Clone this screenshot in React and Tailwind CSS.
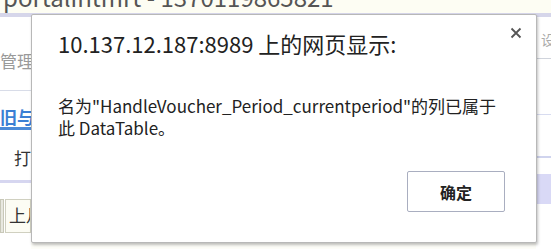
import React from "react";

export default function App() {
  const font = { fontFamily: '"Noto Sans CJK SC", "Microsoft YaHei", sans-serif' };
  return (
    <div
      className="relative w-[551px] h-[249px] overflow-hidden bg-[#fdfdf8]"
      style={font}
    >
      {/* background page */}
      <div className="flex flex-col w-full h-full">
        <div className="h-[13px] overflow-hidden bg-[#fdfdf3]">
          <div className="-mt-[16px] pl-[3px] text-[24px] leading-[26px] text-[#555] whitespace-nowrap">
            portalintmrt - 1370119865821
          </div>
        </div>
        <div className="h-[4px] bg-[#d6d6ea]" />
        <div className="flex flex-1">
          {/* left strip */}
          <div className="w-[31px] flex flex-col bg-white">
            <div className="h-[29px]" />
            <div className="h-[30px] text-[17px] leading-[30px] text-[#9a9a9a] whitespace-nowrap">管理</div>
            <div className="h-[14px]" />
            <div className="h-[1px] bg-[#d8dce8]" />
            <div className="h-[16px]" />
            <div className="h-[20px] text-[17px] leading-[20px] font-bold text-[#3b7fd4] whitespace-nowrap">旧与</div>
            <div className="h-[3px] bg-[#4b8ad8]" />
            <div className="h-[16px]" />
            <div className="h-[24px] pl-[14px] text-[17px] leading-[24px] text-[#333] whitespace-nowrap">打</div>
            <div className="h-[10px]" />
            <div className="h-[3px] bg-[#d6d6f0]" />
            <div className="h-[16px]" />
            <div className="flex h-[34px]">
              <div className="w-[4px] border border-[#c8c8b8] bg-[#e8e8e0]" />
              <div className="ml-[1px] flex-1 border border-[#d0d0c0] bg-[#fcfcf4] pl-[3px] text-[17px] leading-[30px] text-[#333] whitespace-nowrap overflow-hidden">
                上月
              </div>
            </div>
          </div>
          <div className="flex-1" />
          {/* right strip */}
          <div className="w-[15px] flex flex-col bg-white">
            <div className="h-[2px]" />
            <div className="h-[40px] border-b border-[#d0d4dc] pl-[5px] text-[14px] leading-[40px] text-[#aaa] overflow-hidden whitespace-nowrap">设-</div>
            <div className="h-[56px] border-b border-[#d8dcf0]" />
            <div className="h-[43px] border-b-2 border-[#d0d4ee]" />
            <div className="h-[16px]" />
            <div className="h-[30px] bg-[#d9d9f6]" />
          </div>
        </div>
      </div>

      {/* dialog */}
      <div className="absolute left-[31px] top-[14px] w-[506px] h-[229px] bg-white border border-[#b8b8b8] rounded-[2px] shadow-[1px_2px_3px_rgba(0,0,0,0.25)]">
        <div className="absolute left-[26px] top-[13px] text-[22px] leading-[30px] text-[#222] whitespace-nowrap">
          10.137.12.187:8989 上的网页显示:
        </div>
        <div className="absolute right-[13px] top-[11px] w-[14px] h-[14px] flex items-center justify-center">
          <svg width="12" height="12" viewBox="0 0 12 12">
            <path d="M1.5 1.5 L10.5 10.5 M10.5 1.5 L1.5 10.5" stroke="#555" strokeWidth="1.8" />
          </svg>
        </div>
        <div className="absolute left-[26px] top-[80px] w-[460px] text-[17px] leading-[22px] text-[#222]">
          名为"HandleVoucher_Period_currentperiod"的列已属于
          <br />
          此 DataTable。
        </div>
        <div className="absolute left-[375px] top-[156px] w-[98px] h-[41px] border border-[#a9aec0] rounded-[2px] flex items-center justify-center text-[16px] font-bold text-[#222]">
          确定
        </div>
      </div>
    </div>
  );
}
